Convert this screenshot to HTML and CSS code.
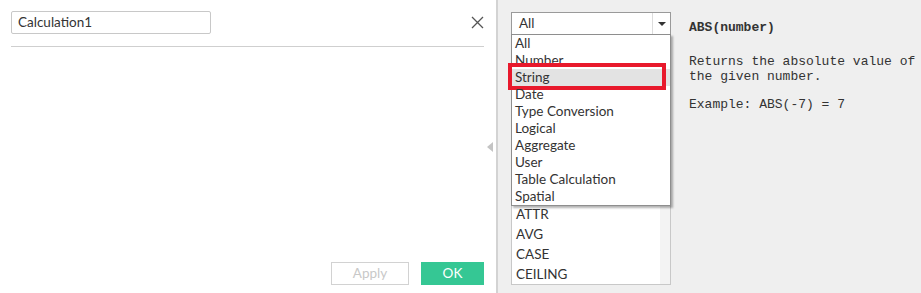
FILE: index.html
```html
<!DOCTYPE html>
<html>
<head>
<meta charset="utf-8">
<link rel="stylesheet" href="styles.css">
</head>
<body>
<div class="app">
  <div class="left">
    <div class="left-main">
      <div class="header">
        <div class="name-input">Calculation1</div>
        <svg class="close" width="13" height="13" viewBox="0 0 13 13"><path d="M1 1L12 12M12 1L1 12" stroke="#555" stroke-width="1.3" fill="none"/></svg>
      </div>
      <div class="rule"></div>
      <div class="spacer"></div>
      <div class="footer">
        <div class="btn btn-apply">Apply</div>
        <div class="btn btn-ok">OK</div>
      </div>
    </div>
    <div class="handle"><div class="tri"></div></div>
  </div>
  <div class="divider"></div>
  <div class="right">
    <div class="func-col">
      <div class="select">
        <div class="select-text">All</div>
        <div class="select-btn"><div class="arrow"></div></div>
      </div>
      <div class="list">
        <div class="list-items">
          <div class="li">ATTR</div>
          <div class="li">AVG</div>
          <div class="li">CASE</div>
          <div class="li">CEILING</div>
        </div>
        <div class="track"></div>
      </div>
      <div class="popup">
        <div class="pi">All</div>
        <div class="pi">Number</div>
        <div class="pi pi-hl">String<div class="redbox"></div></div>
        <div class="pi">Date</div>
        <div class="pi">Type Conversion</div>
        <div class="pi">Logical</div>
        <div class="pi">Aggregate</div>
        <div class="pi">User</div>
        <div class="pi">Table Calculation</div>
        <div class="pi">Spatial</div>
      </div>
    </div>
    <div class="help">
      <div class="h-title">ABS(number)</div>
      <div class="h-para">Returns the absolute value of<br>the given number.</div>
      <div class="h-ex">Example: ABS(-7) = 7</div>
    </div>
  </div>
</div>
</body>
</html>
```
FILE: styles.css
```css
html, body {
  margin: 0;
  padding: 0;
}
body {
  width: 921px;
  height: 293px;
  overflow: hidden;
  font-family: Lato, "Open Sans", sans-serif;
  font-size: 13.5px;
  color: #333;
}
.app {
  display: flex;
  height: 293px;
}
.left {
  width: 496px;
  background: #fff;
  display: flex;
  padding-left: 11px;
  box-sizing: border-box;
}
.left-main {
  width: 473px;
  display: flex;
  flex-direction: column;
  padding-top: 11px;
  padding-bottom: 8px;
  box-sizing: border-box;
}
.header {
  display: flex;
  align-items: center;
  justify-content: space-between;
  height: 23px;
}
.name-input {
  width: 200px;
  height: 23px;
  box-sizing: border-box;
  border: 1px solid #c8c8c8;
  border-radius: 2px;
  padding-left: 6px;
  line-height: 21px;
  color: #333;
}
.close {
  display: block;
}
.rule {
  margin-top: 12px;
  height: 1px;
  background: #cfcfcf;
}
.spacer {
  flex: 1;
}
.footer {
  display: flex;
  justify-content: flex-end;
  gap: 12px;
}
.btn {
  height: 23px;
  box-sizing: border-box;
  text-align: center;
  line-height: 21px;
}
.btn-apply {
  width: 78px;
  border: 1px solid #d2d2d2;
  color: #c8c8c8;
  background: #fff;
}
.btn-ok {
  width: 63px;
  border: 1px solid #35c794;
  background: #35c794;
  color: #fff;
}
.handle {
  width: 12px;
  display: flex;
  align-items: center;
  justify-content: center;
}
.tri {
  width: 0;
  height: 0;
  border-top: 5px solid transparent;
  border-bottom: 5px solid transparent;
  border-right: 6px solid #c4c4c4;
  margin-top: 1px;
}
.divider {
  width: 2px;
  background: #d3d3d3;
}
.right {
  flex: 1;
  background: #efefef;
  display: flex;
  padding-left: 13px;
  padding-top: 12px;
}
.func-col {
  width: 160px;
  position: relative;
}
.select {
  height: 23px;
  box-sizing: border-box;
  border: 1px solid #9a9a9a;
  background: #fff;
  display: flex;
}
.select-text {
  flex: 1;
  padding-left: 7px;
  line-height: 21px;
}
.select-btn {
  width: 17px;
  border-left: 1px solid #dcdcdc;
  display: flex;
  align-items: center;
  justify-content: center;
}
.arrow {
  width: 0;
  height: 0;
  border-left: 4px solid transparent;
  border-right: 4px solid transparent;
  border-top: 4px solid #333;
  margin-left: 1px;
}
.list {
  height: 250px;
  box-sizing: border-box;
  border: 1px solid #c8c8c8;
  border-top: none;
  background: #fff;
  display: flex;
  overflow: hidden;
}
.list-items {
  flex: 1;
  padding-top: 169px;
}
.li {
  height: 20px;
  line-height: 20px;
  padding-left: 4px;
}
.track {
  width: 10px;
  background: #f3f3f3;
}
.popup {
  position: absolute;
  left: 0;
  top: 22px;
  width: 160px;
  box-sizing: border-box;
  border: 1px solid #8e8e8e;
  background: #fff;
  box-shadow: 2px 2px 2px rgba(0, 0, 0, 0.3);
}
.pi {
  height: 17px;
  line-height: 17px;
  padding-left: 3px;
  position: relative;
}
.pi-hl {
  background: #e3e3e3;
}
.redbox {
  position: absolute;
  left: -4px;
  right: 4px;
  top: -6px;
  bottom: -4px;
  border: 4px solid #e8192c;
}
.help {
  margin-left: 18px;
  padding-top: 8px;
  font-family: "Liberation Mono", "Courier New", monospace;
  font-size: 13px;
  line-height: 15px;
  color: #333;
}
.h-title {
  font-weight: bold;
}
.h-para {
  margin-top: 19px;
}
.h-ex {
  margin-top: 13px;
}
```
